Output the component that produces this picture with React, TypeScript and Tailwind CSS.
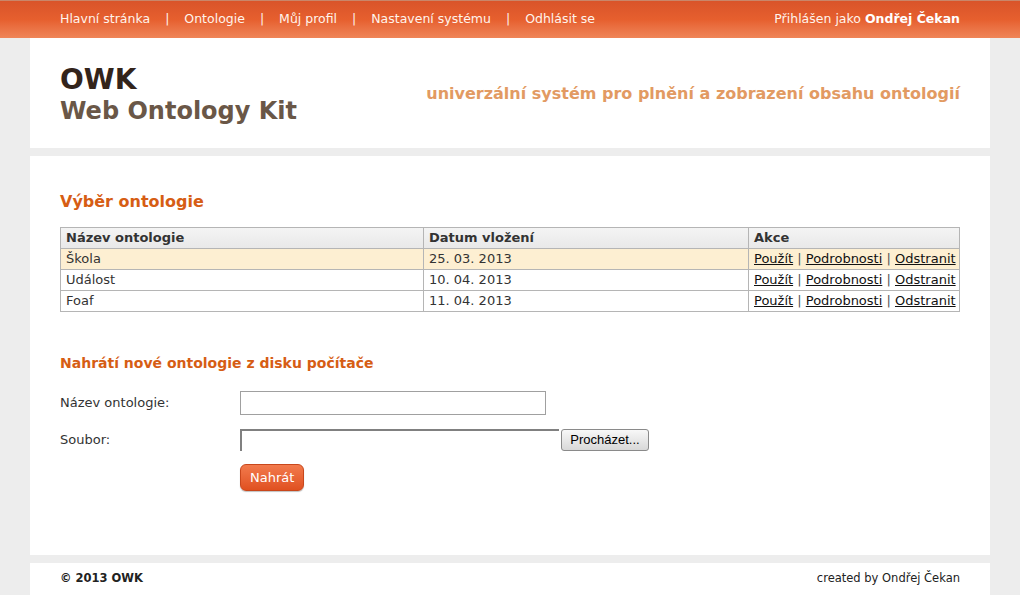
import React from "react";

const font = "font-['DejaVu_Sans',Verdana,sans-serif]";

const rows = [
  { name: "Škola", date: "25. 03. 2013", hl: true },
  { name: "Událost", date: "10. 04. 2013", hl: false },
  { name: "Foaf", date: "11. 04. 2013", hl: false },
];

const nav = ["Hlavní stránka", "Ontologie", "Můj profil", "Nastavení systému", "Odhlásit se"];

export default function App() {
  return (
    <div className={`${font} min-h-[595px] bg-[#ededed] text-[13px] text-[#333]`}>
      {/* Top bar */}
      <div className="h-[38px] bg-gradient-to-b from-[#d9542a] via-[#e65f2e] to-[#ef8558] border-t border-[#c9866a]">
        <div className="mx-[30px] flex h-full items-center justify-between px-[30px] text-[12.5px] text-[#fff4ec]">
          <div className="flex items-center">
            {nav.map((n, i) => (
              <span key={n} className="flex items-center">
                {i > 0 && <span className="px-[15px]">|</span>}
                <span>{n}</span>
              </span>
            ))}
          </div>
          <div>
            Přihlášen jako <b className="text-white">Ondřej Čekan</b>
          </div>
        </div>
      </div>

      {/* Header */}
      <div className="mx-[30px] flex h-[110px] items-center justify-between bg-white px-[30px]">
        <div className="mt-[3px] leading-none">
          <div className="text-[28px] font-bold text-[#33241b]">OWK</div>
          <div className="mt-[5px] text-[24px] font-bold text-[#6a5747]">Web Ontology Kit</div>
        </div>
        <div className="mt-[2px] text-[16px] font-bold text-[#e29a62]">
          univerzální systém pro plnění a zobrazení obsahu ontologií
        </div>
      </div>

      {/* Main */}
      <div className="mx-[30px] mt-[8px] h-[399px] bg-white px-[30px] pt-[34px]">
        <h2 className="text-[16px] font-bold text-[#d65d14]">Výběr ontologie</h2>
        <table className="mt-[13px] w-full table-fixed border-collapse border border-[#b5b5b5] leading-[20px]">
          <thead>
            <tr className="bg-gradient-to-b from-[#f4f4f4] to-[#e8e8e8] text-left font-bold text-[#333]">
              <th className="w-[363px] border border-[#b5b5b5] px-[5px] py-0">Název ontologie</th>
              <th className="w-[325px] border border-[#b5b5b5] px-[5px] py-0">Datum vložení</th>
              <th className="border border-[#b5b5b5] px-[5px] py-0">Akce</th>
            </tr>
          </thead>
          <tbody>
            {rows.map((r) => (
              <tr key={r.name} className={r.hl ? "bg-[#fdefd2]" : "bg-white"}>
                <td className="border border-[#b5b5b5] px-[5px] py-0">{r.name}</td>
                <td className="border border-[#b5b5b5] px-[5px] py-0">{r.date}</td>
                <td className="whitespace-nowrap border border-[#b5b5b5] px-[5px] py-0 text-[13px] text-[#111]">
                  <a className="underline">Použít</a> <span className="text-[#555]">|</span>{" "}
                  <a className="underline">Podrobnosti</a> <span className="text-[#555]">|</span>{" "}
                  <a className="underline">Odstranit</a>
                </td>
              </tr>
            ))}
          </tbody>
        </table>

        <h2 className="mt-[41px] text-[14px] font-bold text-[#d65d14]">Nahrátí nové ontologie z disku počítače</h2>

        <div className="mt-[17px] flex items-center">
          <span className="w-[180px]">Název ontologie:</span>
          <div className="h-[24px] w-[306px] border border-[#a0a0a0] bg-white" />
        </div>
        <div className="mt-[14px] flex items-center">
          <span className="w-[180px]">Soubor:</span>
          <div className="h-[22px] w-[319px] border-t-2 border-l-2 border-[#808080] bg-white" />
          <button className="ml-[2px] h-[22px] w-[88px] rounded-[3px] border border-[#8a8a8a] bg-gradient-to-b from-[#f8f8f8] to-[#d8d8d8] font-['Liberation_Sans',Arial,sans-serif] text-[13px] text-black">
            Procházet...
          </button>
        </div>
        <div className="mt-[13px] pl-[180px]">
          <button className="h-[27px] rounded-[6px] border border-[#c8471c] bg-gradient-to-b from-[#f27a4c] to-[#e0501f] px-[9px] text-[13px] text-white shadow-[0_1px_1px_rgba(0,0,0,0.25)]">
            Nahrát
          </button>
        </div>
      </div>

      {/* Footer */}
      <div className="mx-[30px] mt-[8px] flex h-[32px] items-center justify-between bg-white px-[30px] text-[11.5px]">
        <b className="text-[#222]">© 2013 OWK</b>
        <span className="text-[#222]">created by Ondřej Čekan</span>
      </div>
    </div>
  );
}
